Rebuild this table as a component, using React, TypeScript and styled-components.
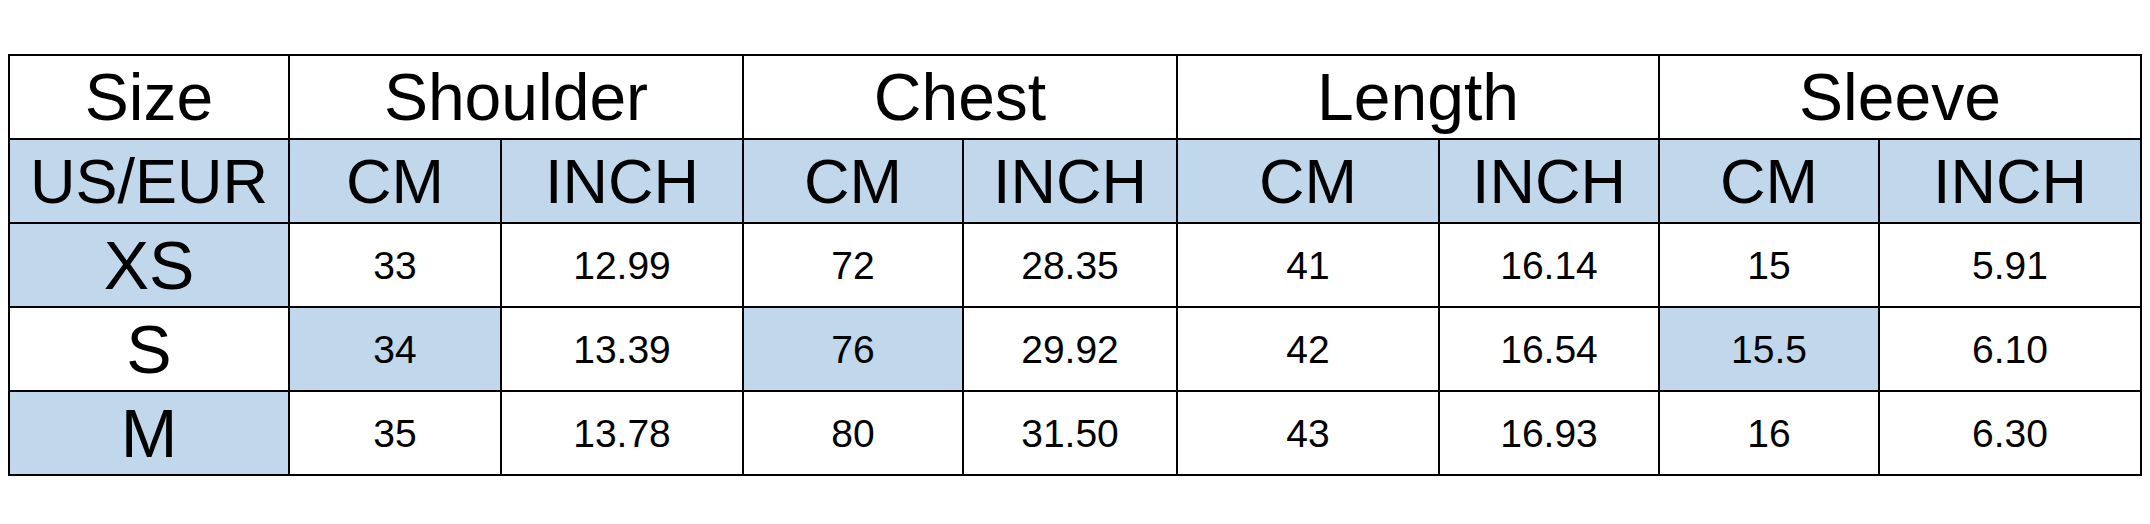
import React from "react";
import styled, { createGlobalStyle } from "styled-components";

const Global = createGlobalStyle`
  body {
    margin: 0;
    background: #fff;
    font-family: "Liberation Sans", Arial, sans-serif;
    color: #000;
  }
`;

const Page = styled.div`
  padding: 54px 8px;
`;

const Grid = styled.div`
  display: grid;
  grid-template-columns: 278px 210px 240px 218px 212px 260px 218px 218px 260px;
  grid-auto-rows: 82px;
  gap: 2px;
  padding: 2px;
  background: #000;
  width: fit-content;
`;

type Kind = "title" | "unit" | "size" | "value";

const fontSizes: Record<Kind, string> = {
  title: "66px",
  unit: "63px",
  size: "68px",
  value: "39px",
};

const Cell = styled.div<{ $blue?: boolean; $kind: Kind; $span?: number }>`
  display: flex;
  align-items: center;
  justify-content: center;
  background: ${(p) => (p.$blue ? "#c1d7eb" : "#fff")};
  grid-column: span ${(p) => p.$span || 1};
  font-size: ${(p) => fontSizes[p.$kind]};
  line-height: 1;
  white-space: nowrap;
`;

const groups = ["Shoulder", "Chest", "Length", "Sleeve"];

const rows = [
  { size: "XS", sizeBlue: true, values: ["33", "12.99", "72", "28.35", "41", "16.14", "15", "5.91"], blue: [] as number[] },
  { size: "S", sizeBlue: false, values: ["34", "13.39", "76", "29.92", "42", "16.54", "15.5", "6.10"], blue: [0, 2, 6] },
  { size: "M", sizeBlue: true, values: ["35", "13.78", "80", "31.50", "43", "16.93", "16", "6.30"], blue: [] as number[] },
];

export default function App() {
  return (
    <Page>
      <Global />
      <Grid>
        <Cell $kind="title">Size</Cell>
        {groups.map((g) => (
          <Cell key={g} $kind="title" $span={2}>
            {g}
          </Cell>
        ))}

        <Cell $kind="unit" $blue>US/EUR</Cell>
        {groups.map((g) => (
          <React.Fragment key={g}>
            <Cell $kind="unit" $blue>CM</Cell>
            <Cell $kind="unit" $blue>INCH</Cell>
          </React.Fragment>
        ))}

        {rows.map((r) => (
          <React.Fragment key={r.size}>
            <Cell $kind="size" $blue={r.sizeBlue}>{r.size}</Cell>
            {r.values.map((v, i) => (
              <Cell key={i} $kind="value" $blue={r.blue.includes(i)}>
                {v}
              </Cell>
            ))}
          </React.Fragment>
        ))}
      </Grid>
    </Page>
  );
}
